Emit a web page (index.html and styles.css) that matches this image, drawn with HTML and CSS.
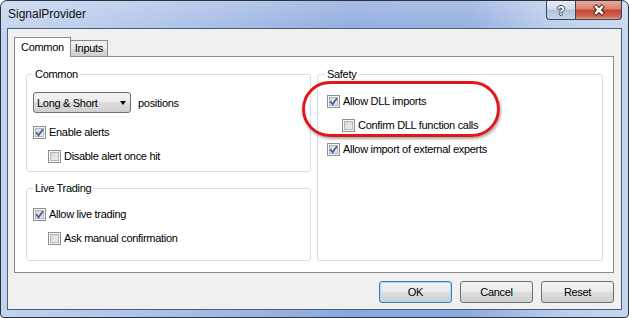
FILE: index.html
```html
<!DOCTYPE html>
<html lang="en">
<head>
    <meta charset="UTF-8" />
    <title>SignalProvider</title>
    <link rel="stylesheet" href="styles.css">
</head>
<body>
    <div class="window">
        <div class="titlebar">
            <span class="title">SignalProvider</span>
            <div class="caption-buttons">
                <div class="cap-btn help"><span>?</span></div>
                <div class="cap-btn close">
                    <svg width="14" height="12" viewBox="0 0 14 12">
                        <path d="M2.6 1.6L11.4 10.4M11.4 1.6L2.6 10.4" stroke="#4a2622" stroke-width="4.4" fill="none"/>
                        <path d="M3.2 2.2L10.8 9.8M10.8 2.2L3.2 9.8" stroke="#fff" stroke-width="2.4" fill="none"/>
                    </svg>
                </div>
            </div>
        </div>

        <div class="client">
            <div class="tabs">
                <div class="tab active">Common</div>
                <div class="tab">Inputs</div>
            </div>

            <div class="panel">
                <div class="col">
                    <fieldset class="group g-common">
                        <legend>Common</legend>
                        <div class="select-row">
                            <div class="select"><span>Long &amp; Short</span><i class="arrow"></i></div>
                            <span class="select-label">positions</span>
                        </div>
                        <div class="row">
                            <span class="check on"><svg viewBox="0 0 13 13"><path d="M3.2 6.2L5.6 9.2L10 3.2" /></svg></span>
                            Enable alerts
                        </div>
                        <div class="row sub">
                            <span class="check"></span>
                            Disable alert once hit
                        </div>
                    </fieldset>

                    <fieldset class="group g-live">
                        <legend>Live Trading</legend>
                        <div class="row">
                            <span class="check on"><svg viewBox="0 0 13 13"><path d="M3.2 6.2L5.6 9.2L10 3.2" /></svg></span>
                            Allow live trading
                        </div>
                        <div class="row sub">
                            <span class="check"></span>
                            Ask manual confirmation
                        </div>
                    </fieldset>
                </div>

                <fieldset class="group g-safety">
                    <legend>Safety</legend>
                    <div class="row">
                        <span class="check on"><svg viewBox="0 0 13 13"><path d="M3.2 6.2L5.6 9.2L10 3.2" /></svg></span>
                        Allow DLL imports
                    </div>
                    <div class="row sub">
                        <span class="check"></span>
                        Confirm DLL function calls
                    </div>
                    <div class="row">
                        <span class="check on"><svg viewBox="0 0 13 13"><path d="M3.2 6.2L5.6 9.2L10 3.2" /></svg></span>
                        Allow import of external experts
                    </div>
                </fieldset>

                <div class="highlight"></div>
            </div>

            <div class="buttons">
                <button class="btn default">OK</button>
                <button class="btn">Cancel</button>
                <button class="btn">Reset</button>
            </div>
        </div>
    </div>
</body>
</html>
```

FILE: styles.css
```css
* {
    box-sizing: border-box;
}
body {
    margin: 0;
    font-family: "Liberation Sans", Arial, sans-serif;
    font-size: 11px;
    letter-spacing: -0.3px;
    color: #000;
}
.window {
    width: 629px;
    height: 318px;
    border: 1px solid #2b3341;
    border-radius: 7px 7px 4px 4px;
    background:
        linear-gradient(180deg, rgba(255, 255, 255, 0.25), rgba(255, 255, 255, 0) 40px),
        linear-gradient(90deg, #c2d3ee 0%, #abc1e8 25%, #8ca8dd 55%, #8fabde 75%, #b7cbeb 88%, #c6d6ef 100%);
    padding: 0 6px 7px;
    display: flex;
    flex-direction: column;
    overflow: hidden;
}
.titlebar {
    height: 27px;
    display: flex;
    align-items: flex-start;
}
.title {
    font-size: 12px;
    letter-spacing: 0;
    line-height: 27px;
    padding-left: 1px;
    color: #111;
}
.caption-buttons {
    margin-left: auto;
    display: flex;
}
.cap-btn {
    height: 19px;
    border: 1px solid #3a4659;
    border-top: none;
    display: flex;
    align-items: center;
    justify-content: center;
}
.help {
    width: 29px;
    border-right: none;
    border-radius: 0 0 0 4px;
    background: linear-gradient(#e6ecf5, #d2dcea 45%, #b3c3dc 50%, #c6d4e8);
}
.help span {
    font-weight: bold;
    font-size: 13px;
    letter-spacing: 0;
    color: #fff;
    text-shadow: 1px 0 0 #3c4656, -1px 0 0 #3c4656, 0 1px 0 #3c4656, 0 -1px 0 #3c4656;
}
.close {
    width: 47px;
    border-radius: 0 0 4px 0;
    background: linear-gradient(#eaab9c, #d7806d 45%, #c5432d 50%, #cf6553 85%, #e09d8d);
}
.client {
    flex: 1;
    background: #f0f0f0;
    border: 1px solid #4d5c77;
    display: flex;
    flex-direction: column;
}
.tabs {
    display: flex;
    align-items: flex-end;
    height: 19px;
    margin: 8px 0 0 6px;
}
.tab {
    height: 16px;
    border: 1px solid #898c95;
    border-bottom: none;
    border-left: none;
    padding: 0 4px;
    line-height: 15px;
    background: linear-gradient(#f2f2f2, #ebebeb 50%, #dddddd 50%, #cfcfcf);
}
.tab.active {
    height: 20px;
    border-left: 1px solid #898c95;
    padding: 0 6px;
    line-height: 18px;
    background: #fff;
    margin-bottom: -1px;
    position: relative;
    z-index: 1;
}
.panel {
    margin: 0 7px 0 6px;
    border: 1px solid #898c95;
    background: #fff;
    padding: 9px 10px 11px 11px;
    display: grid;
    grid-template-columns: 285px 286px;
    column-gap: 6px;
    position: relative;
}
.col {
    display: flex;
    flex-direction: column;
}
.group {
    margin: 0;
    min-width: 0;
    border: 1px solid #d5dfe5;
    border-radius: 3px;
    padding: 0 6px;
}
.group legend {
    padding: 0 2px;
    line-height: 16px;
}
.g-common {
    padding-bottom: 3px;
}
.g-live {
    margin-top: 8px;
    padding-top: 6px;
    padding-bottom: 10px;
}
.g-safety {
    padding-left: 9px;
    padding-top: 7px;
}
.g-safety legend {
    margin-left: -2px;
}
.select-row {
    display: flex;
    align-items: center;
    margin: 10px 0 7px;
}
.select {
    width: 98px;
    height: 21px;
    border: 1px solid #707070;
    border-radius: 3px;
    background: linear-gradient(#f2f2f2, #ebebeb 50%, #dddddd 50%, #cfcfcf);
    display: flex;
    align-items: center;
    padding: 0 4px 0 3px;
}
.arrow {
    margin-left: auto;
    width: 0;
    height: 0;
    border-left: 3.5px solid transparent;
    border-right: 3.5px solid transparent;
    border-top: 4px solid #000;
}
.select-label {
    margin-left: 7px;
}
.row {
    display: flex;
    align-items: center;
    height: 24px;
}
.row.sub {
    padding-left: 15px;
}
.check {
    flex: none;
    width: 13px;
    height: 13px;
    margin-right: 3px;
    border: 1px solid #8e8f8f;
    background: linear-gradient(135deg, #cdd0d5, #f4f4f4);
    box-shadow: inset 0 0 0 1px #f4f4f4, inset 0 0 0 2px #b4b8be;
}
.check svg {
    display: block;
    width: 13px;
    height: 13px;
    margin: -1px;
}
.check svg path {
    fill: none;
    stroke: #4a5f97;
    stroke-width: 1.8;
}
.highlight {
    position: absolute;
    left: 287px;
    top: 24px;
    width: 198px;
    height: 56px;
    border: 3px solid #e2171b;
    border-radius: 28px;
    box-shadow: 1px 2px 3px rgba(0, 0, 0, 0.35);
    pointer-events: none;
}
.buttons {
    display: flex;
    justify-content: flex-end;
    gap: 8px;
    margin: 8px 7px 0 0;
}
.btn {
    width: 73px;
    height: 22px;
    font: inherit;
    letter-spacing: inherit;
    color: #000;
    border: 1px solid #707070;
    border-radius: 3px;
    background: linear-gradient(#f2f2f2, #ebebeb 50%, #dddddd 50%, #cfcfcf);
    padding: 0;
}
.btn.default {
    border-color: #3c7fb1;
    box-shadow: inset 0 0 0 1px #9fdcfb;
}
```
